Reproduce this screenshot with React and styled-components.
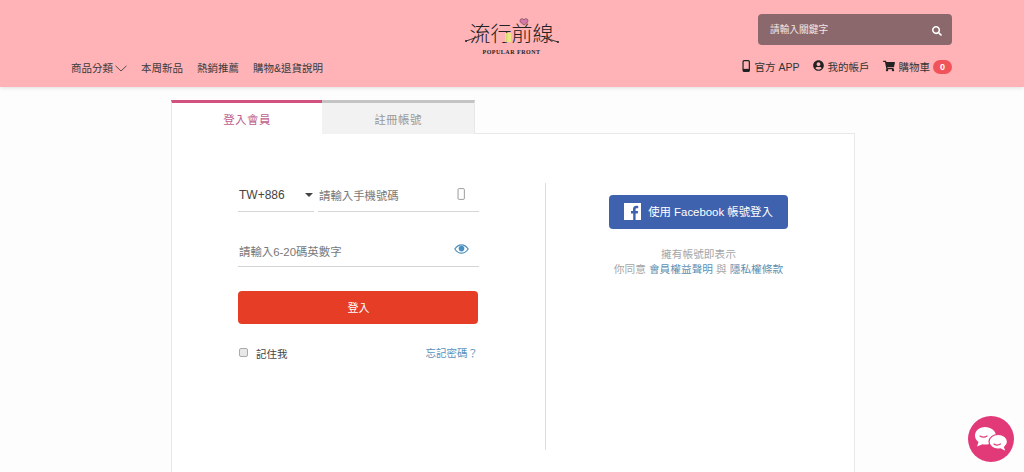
import React from 'react';
import styled, { createGlobalStyle } from 'styled-components';
import { FaSearch, FaUserCircle, FaShoppingCart } from 'react-icons/fa';

const CJK = `"Liberation Sans", "Noto Sans CJK TC", sans-serif`;

const GlobalStyle = createGlobalStyle`
  html, body {
    margin: 0;
    height: 472px;
    overflow: hidden;
    background: #fdfdfd;
    font-family: ${CJK};
  }
  * { box-sizing: border-box; }
`;

const PhoneIcon = ({ size = 12, color = '#222', solid }) => (
  <svg width={size * 0.7} height={size} viewBox="0 0 10 16">
    <rect x="0.8" y="0.8" width="8.4" height="14.4" rx="1.4" fill="none" stroke={color} strokeWidth={solid ? 1.6 : 1.1} />
    <rect x="0.8" y="11.8" width="8.4" height="3.4" fill={solid ? color : 'none'} />
  </svg>
);

const ChevronIcon = () => (
  <svg width="12" height="7" viewBox="0 0 12 7">
    <path d="M0.5 0.8 6 6l5.500-5.200" fill="none" stroke="#444" strokeWidth="0.9" />
  </svg>
);

const EyeIcon = () => (
  <svg width="15" height="10" viewBox="0 0 15 10">
    <path d="M0.8 5C3 1.800 5.200 0.800 7.500 0.800S12 1.800 14.200 5C12 8.200 9.800 9.200 7.500 9.200S3 8.200 0.800 5z" fill="none" stroke="#4a8fc0" strokeWidth="1.2" />
    <circle cx="7.500" cy="4.600" r="2.800" fill="#4a8fc0" />
  </svg>
);

const FacebookIcon = () => (
  <svg width="17" height="17" viewBox="0 0 17 17">
    <path d="M0 0h17v17h-5.400v-6.400h2.200l.3-2.600h-2.500V6.500c0-.8.200-1.300 1.300-1.300h1.300V2.900c-.3 0-1-.1-1.900-.1-1.900 0-3.300 1.200-3.300 3.300V8H7v2.600h2.200V17H0z" fill="#fff" />
  </svg>
);

const ChatIcon = () => (
  <svg width="46" height="46" viewBox="0 0 46 46">
    <circle cx="23" cy="23" r="23" fill="#e23a78" />
    <path d="M17 11c-5.700 0-10 3.700-10 8.500 0 2.700 1.400 5 3.500 6.500L9 30.500l5.500-2.300c.8.200 1.700.3 2.500.3 5.700 0 11-3.800 11-8.800S22.700 11 17 11z" fill="#fff" />
    <path d="M30 18.500c-5 0-9 3.300-9 7.300s4 7.300 9 7.300c.8 0 1.600-.1 2.300-.3l6.200 3.200-2-4.800c1.800-1.300 3-3.200 3-5.400 0-4-4-7.300-9.500-7.300z" fill="#fff" stroke="#e23a78" strokeWidth="1.2" />
    <path d="M12 20c2 1.400 5 1.400 7 0M26 28c1.700 1.200 4.500 1.200 6.500 0" fill="none" stroke="#e23a78" strokeWidth="1.2" strokeLinecap="round" />
  </svg>
);

export default function App() {
  return (
    <>
      <GlobalStyle />
      <Header>
        <NavColumn>
          <NavLink>商品分類 <ChevronIcon /></NavLink>
          <NavLink>本周新品</NavLink>
          <NavLink>熱銷推薦</NavLink>
          <NavLink>購物&amp;退貨說明</NavLink>
        </NavColumn>
        <Logo>
          <LogoMark>
            <LogoText>流行前線</LogoText>
            <LogoDrawing width="96" height="30" viewBox="0 0 96 30">
              <path d="M2 23C8 21 14 19 20 16M94 24C88 22 84 21 80 20" fill="none" stroke="#222" strokeWidth="0.9" />
              <circle cx="2" cy="23" r="1" fill="#222" />
              <circle cx="94" cy="24" r="1" fill="#222" />
              <path d="M60 1.800c-1-1.800-4-1.300-4 .9 0 1.700 2 3 4 4.300 2-1.300 4-2.600 4-4.300 0-2.200-3-2.700-4-.9z" fill="#d877ab" stroke="#333" strokeWidth="0.5" />
              <rect x="41" y="15" width="6" height="9" fill="#e8ef7a" opacity="0.85" />
            </LogoDrawing>
          </LogoMark>
          <LogoSub>POPULAR FRONT</LogoSub>
        </Logo>
        <AccountColumn>
          <SearchBox>
            <span>請輸入關鍵字</span>
            <FaSearch size={10} color="#fff" />
          </SearchBox>
          <AccountLinks>
            <AccountLink><PhoneIcon size={12} solid /> 官方 APP</AccountLink>
            <AccountLink><FaUserCircle size={11} /> 我的帳戶</AccountLink>
            <AccountLink>
              <FaShoppingCart size={12} /> 購物車 <CartBadge>0</CartBadge>
            </AccountLink>
          </AccountLinks>
        </AccountColumn>
      </Header>

      <Main>
        <Tabs>
          <Tab $active>登入會員</Tab>
          <Tab>註冊帳號</Tab>
        </Tabs>
        <Card>
          <LoginColumn>
            <PhoneRow>
              <CountrySelect>TW+886<Caret /></CountrySelect>
              <Field>
                請輸入手機號碼
                <PhoneIcon size={12} color="#888" />
              </Field>
            </PhoneRow>
            <PasswordField>
              請輸入6-20碼英數字
              <EyeIcon />
            </PasswordField>
            <LoginButton>登入</LoginButton>
            <OptionsRow>
              <Remember><CheckBox />記住我</Remember>
              <Forgot>忘記密碼？</Forgot>
            </OptionsRow>
          </LoginColumn>
          <SocialColumn>
            <FacebookButton>
              <FacebookIcon />
              使用 Facebook 帳號登入
            </FacebookButton>
            <Terms>
              擁有帳號即表示<br />
              你同意 <TermsLink>會員權益聲明</TermsLink> 與 <TermsLink>隱私權條款</TermsLink>
            </Terms>
          </SocialColumn>
        </Card>
      </Main>

      <ChatBubble><ChatIcon /></ChatBubble>
    </>
  );
}

const Header = styled.header`
  height: 87px;
  background: #ffb3b7;
  box-shadow: 0 1px 4px rgba(0, 0, 0, 0.12);
  display: grid;
  grid-template-columns: 1fr auto 1fr;
  padding: 14px 72px 12px 71px;
`;

const NavColumn = styled.nav`
  display: flex;
  align-items: flex-end;
  gap: 14px;
`;

const NavLink = styled.span`
  display: inline-flex;
  align-items: center;
  gap: 2px;
  font-size: 10.500px;
  line-height: 14px;
  color: #3a3a3a;
  white-space: nowrap;
`;

const Logo = styled.div`
  width: 96px;
  margin: 4px 0 0;
  display: flex;
  flex-direction: column;
  align-items: center;
`;

const LogoMark = styled.div`
  position: relative;
  width: 96px;
  height: 31px;
`;

const LogoText = styled.span`
  position: absolute;
  left: 6px;
  top: 1px;
  font-family: "Noto Sans CJK TC", sans-serif;
  font-size: 21px;
  font-weight: 300;
  line-height: 26px;
  color: #222;
  white-space: nowrap;
`;

const LogoDrawing = styled.svg`
  position: absolute;
  left: 0;
  top: 0;
`;

const LogoSub = styled.span`
  font-family: "Liberation Serif", serif;
  font-size: 6px;
  font-weight: 700;
  letter-spacing: 0.5px;
  color: #222;
  white-space: nowrap;
`;

const AccountColumn = styled.div`
  display: flex;
  flex-direction: column;
  align-items: flex-end;
  justify-content: space-between;
`;

const SearchBox = styled.div`
  width: 194px;
  height: 31px;
  border-radius: 4px;
  background: #8a686b;
  color: #f3e6e6;
  font-size: 9.700px;
  display: flex;
  align-items: center;
  justify-content: space-between;
  padding: 0 10px 0 12px;

  span {
    margin-top: -1px;
  }

  svg {
    margin-top: 2px;
  }
`;

const AccountLinks = styled.div`
  display: flex;
  align-items: center;
  gap: 13px;
`;

const AccountLink = styled.span`
  display: inline-flex;
  align-items: center;
  gap: 4px;
  font-size: 10.500px;
  line-height: 16px;
  color: #333;
  white-space: nowrap;

  svg {
    color: #222;
    margin-top: -3px;
  }
`;

const CartBadge = styled.span`
  width: 19px;
  height: 14px;
  margin-left: -1px;
  border-radius: 7px;
  background: #f0545a;
  color: #fff;
  font-size: 9px;
  font-weight: 700;
  display: inline-flex;
  align-items: center;
  justify-content: center;
`;

const Main = styled.main`
  width: 684px;
  margin: 13px 0 0 171px;
`;

const Tabs = styled.div`
  display: flex;
`;

const Tab = styled.div`
  width: ${({ $active }) => ($active ? '151px' : '153px')};
  height: 34px;
  margin-bottom: -1px;
  position: relative;
  border-top: 3px solid ${({ $active }) => ($active ? '#d2527f' : '#c4c4c4')};
  border-left: ${({ $active }) => ($active ? '1px solid #e8e8e8' : 'none')};
  border-right: ${({ $active }) => ($active ? 'none' : '1px solid #e8e8e8')};
  background: ${({ $active }) => ($active ? '#fff' : '#f2f2f2')};
  color: ${({ $active }) => ($active ? '#bf5f8c' : '#999')};
  font-size: 11.500px;
  letter-spacing: 0.4px;
  display: flex;
  align-items: center;
  justify-content: center;
`;

const Card = styled.section`
  height: 345px;
  background: #fff;
  border: 1px solid #e8e8e8;
  padding: 49px 0 0 66px;
  display: flex;
`;

const LoginColumn = styled.div`
  width: 241px;
  display: flex;
  flex-direction: column;
`;

const PhoneRow = styled.div`
  display: flex;
  gap: 4px;
`;

const CountrySelect = styled.div`
  width: 76px;
  height: 29px;
  border-bottom: 1px solid #d5d5d5;
  display: flex;
  align-items: flex-start;
  justify-content: space-between;
  padding: 5px 1px 0 1px;
  font-size: 12px;
  line-height: 14px;
  color: #444;
`;

const Caret = styled.span`
  margin-top: 5px;
  border-top: 4px solid #444;
  border-left: 4px solid transparent;
  border-right: 4px solid transparent;
`;

const Field = styled.div`
  flex: 1;
  height: 29px;
  border-bottom: 1px solid #d5d5d5;
  display: flex;
  align-items: flex-start;
  justify-content: space-between;
  padding: 6px 14px 0 1px;
  font-size: 11.400px;
  line-height: 14px;
  color: #777;

  svg {
    margin-top: -1px;
  }
`;

const PasswordField = styled(Field)`
  flex: none;
  height: 33px;
  margin-top: 22px;
  padding: 11px 10px 0 1px;

  svg {
    margin-top: -1px;
  }
`;

const LoginButton = styled.button`
  height: 33px;
  width: 240px;
  margin-top: 24px;
  padding: 0 0 2px 1px;
  border: none;
  border-radius: 4px;
  background: #e53d26;
  color: #fff;
  font: 11px ${CJK};
`;

const OptionsRow = styled.div`
  display: flex;
  align-items: center;
  justify-content: space-between;
  margin-top: 22px;
  padding: 0 1px 0 1px;
`;

const Remember = styled.label`
  display: flex;
  align-items: center;
  gap: 8px;
  font-size: 10.500px;
  color: #444;
`;

const CheckBox = styled.span`
  width: 9px;
  height: 9px;
  margin-top: -3px;
  border: 1px solid #aaa;
  border-radius: 2px;
  background: #e8e8e8;
`;

const Forgot = styled.a`
  font-size: 10.500px;
  color: #5a93bb;
  margin-top: -3px;
`;

const SocialColumn = styled.div`
  width: 306px;
  height: 267px;
  margin-left: 66px;
  border-left: 1px solid #dedede;
  padding-top: 12px;
  display: flex;
  flex-direction: column;
  align-items: center;
`;

const FacebookButton = styled.div`
  width: 179px;
  height: 34px;
  border-radius: 4px;
  background: #3f62ae;
  color: #fff;
  font-size: 11.400px;
  padding-bottom: 2px;
  display: flex;
  align-items: center;
  justify-content: center;
  gap: 7px;
`;

const Terms = styled.p`
  margin: 18px 0 0;
  text-align: center;
  font-size: 10.700px;
  line-height: 15px;
  color: #a6a6a6;
`;

const TermsLink = styled.a`
  color: #5f8fb0;
`;

const ChatBubble = styled.div`
  position: fixed;
  right: 10px;
  bottom: 10px;
  width: 46px;
  height: 46px;
`;
